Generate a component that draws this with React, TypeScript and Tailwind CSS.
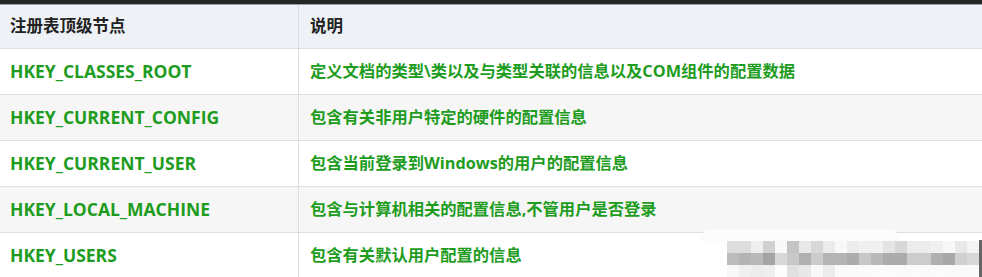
import React from "react";

const rows = [
  { key: "HKEY_CLASSES_ROOT", desc: "定义文档的类型\\类以及与类型关联的信息以及COM组件的配置数据" },
  { key: "HKEY_CURRENT_CONFIG", desc: "包含有关非用户特定的硬件的配置信息" },
  { key: "HKEY_CURRENT_USER", desc: "包含当前登录到Windows的用户的配置信息" },
  { key: "HKEY_LOCAL_MACHINE", desc: "包含与计算机相关的配置信息,不管用户是否登录" },
  { key: "HKEY_USERS", desc: "包含有关默认用户配置的信息" },
];

// pixelated watermark blocks, 12px each
const mosaic = [
  ["#ddd", "#ddd", "#eee", "#d0d0d0", "#f8f8f8", "#c4c4c4", "#e8e8e8", "#d8d8d8", "#ececec", "#f8f8f8", "#ececec", "#f0f0f0", "#f0f0f0", "#e4e4e4", "#d8d8d8", "#ececec", "#ececec", "#f0f0f0", "#f8f8f8", "#e8e8e8", "#f4f4f4"],
  ["#bcbcbc", "#b4b4b4", "#b8b8b8", "#a4a4a4", "#d8d8d8", "#c8c8c8", "#b0b0b0", "#cccccc", "#b4b4b4", "#b4b4b4", "#acacac", "#c8c8c8", "#b8b8b8", "#acacac", "#acacac", "#cccccc", "#cccccc", "#b0b0b0", "#a8a8a8", "#d0d0d0", "#d8d8d8"],
  ["#f8f8f8", "#f0f0f0", "#ececec", "#eeeeee", "#fcfcfc", "#e0e0e0", "#e8e8e8", "#f8f8f8", "#ececec", "#fafafa", "#fafafa", "#fafafa", "#fbfbfb", "#fbfbfb", "#fafafa", "#fbfbfb", "#fafafa", "#fbfbfb", "#fafafa", "#fafafa", "#fafafa"],
];

export default function App() {
  return (
    <div className="relative w-[982px] h-[277px] overflow-hidden bg-white font-['Open_Sans','Noto_Sans_CJK_SC',sans-serif]">
      <div className="h-[4px] bg-[#262626]" />
      <div className="grid grid-cols-[299px_1fr] h-[45px] bg-[#eef2f6] border-t border-[#9aa0a6] border-b border-b-[#dcdfe3] text-[16.5px] font-bold text-[#222]">
        <div className="flex items-center pl-[10px] border-r border-[#dcdfe3]">注册表顶级节点</div>
        <div className="flex items-center pl-[11px]">说明</div>
      </div>
      {rows.map((r, i) => (
        <div
          key={r.key}
          className={`grid grid-cols-[299px_1fr] h-[46px] border-b border-[#dedede] font-bold text-[#1e9c1e] ${i % 2 === 1 ? "bg-[#f6f6f6]" : "bg-white"}`}
        >
          <div className="flex items-center pl-[10px] border-r border-[#dedede] text-[17.5px]">{r.key}</div>
          <div className="flex items-center pl-[11px] text-[16.3px]">{r.desc}</div>
        </div>
      ))}
      <div className="absolute left-[700px] top-[229px] w-[200px] h-[12px] rounded-t-[40px] bg-[#fbfbfb]" />
      <div className="absolute left-[727px] top-[241px] flex flex-col">
        {mosaic.map((line, y) => (
          <div key={y} className="flex">
            {line.map((c, x) => (
              <div key={x} className="w-[12px] h-[12px]" style={{ backgroundColor: c }} />
            ))}
          </div>
        ))}
      </div>
      <div className="absolute left-[979px] top-[240px] w-[3px] h-[37px] bg-[#666]" />
    </div>
  );
}
